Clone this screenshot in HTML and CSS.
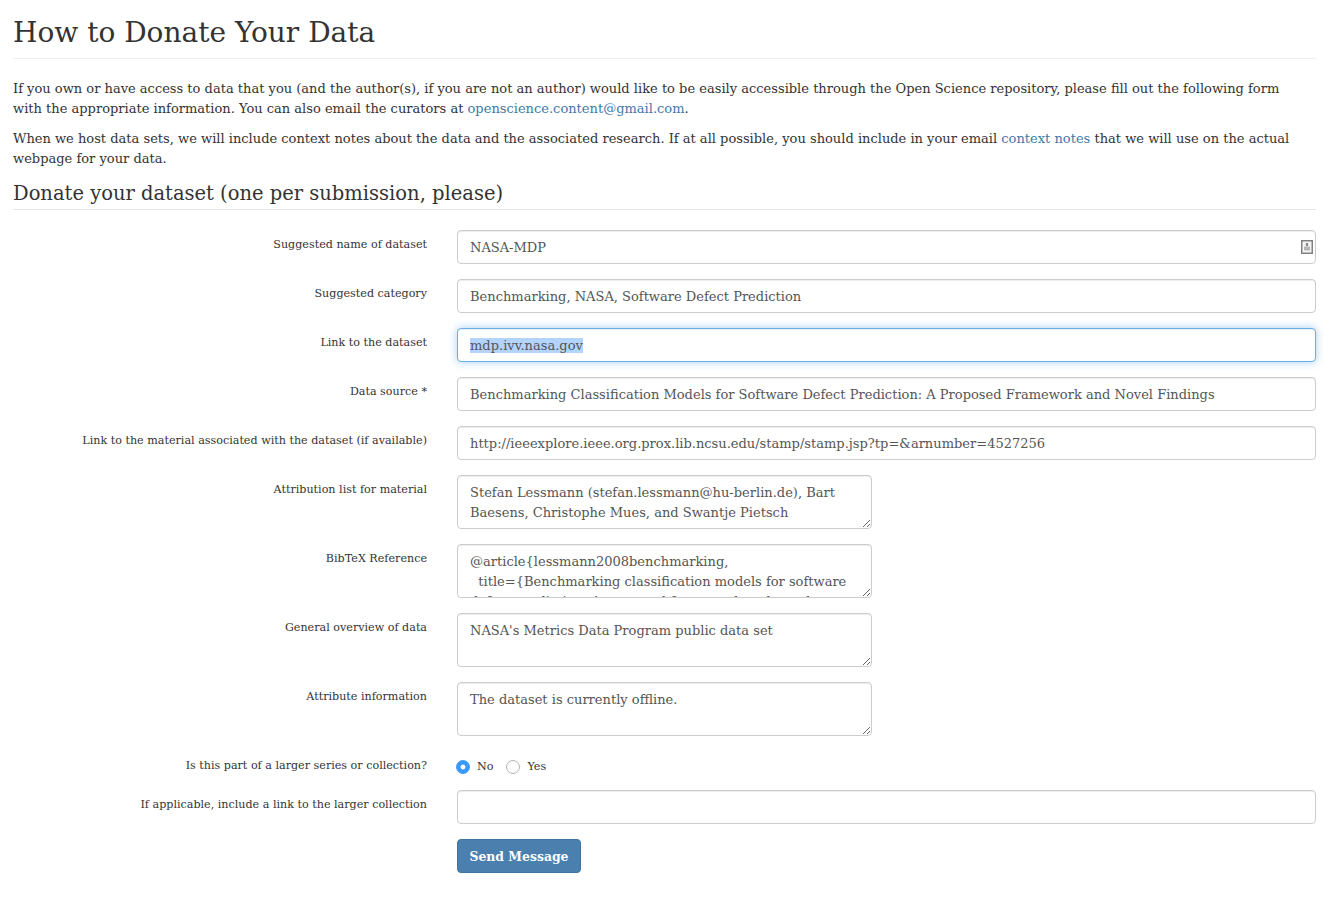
FILE: index.html
```html
<!DOCTYPE html>
<html>
<head>
<meta charset="utf-8">
<title>How to Donate Your Data</title>
<link rel="stylesheet" href="styles.css">
</head>
<body>

<div id="main">

  <h1 class="page-title">How to Donate Your Data</h1>

  <p>If you own or have access to data that you (and the author(s), if you are not an author) would like to be easily accessible through the Open Science repository, please fill out the following form with the appropriate information. You can also email the curators at <a href="#">openscience.content@gmail.com</a>.</p>
  <p>When we host data sets, we will include context notes about the data and the associated research. If at all possible, you should include in your email <a href="#">context notes</a> that we will use on the actual webpage for your data.</p>

  <h2 class="form-title">Donate your dataset (one per submission, please)</h2>

  <form class="donate-form">

    <div class="row">
      <label for="f1">Suggested name of dataset</label>
      <div class="field has-icon">
        <input id="f1" type="text" value="NASA-MDP">
        <svg class="contact-icon" width="12" height="14" viewBox="0 0 12 14">
          <rect x="0.75" y="0.75" width="10.5" height="12.5" fill="#f7f7f7" stroke="#808080" stroke-width="1.5"/>
          <rect x="4.8" y="3" width="2.4" height="3" fill="#8a8a8a"/>
          <rect x="3" y="6.5" width="6" height="4" fill="#b5b5b5"/>
        </svg>
      </div>
    </div>

    <div class="row">
      <label for="f2">Suggested category</label>
      <div class="field"><input id="f2" type="text" value="Benchmarking, NASA, Software Defect Prediction"></div>
    </div>

    <div class="row">
      <label for="f3">Link to the dataset</label>
      <div class="field"><input id="f3" type="text" value="mdp.ivv.nasa.gov" autofocus onfocus="this.select()"></div>
    </div>

    <div class="row">
      <label for="f4">Data source *</label>
      <div class="field"><input id="f4" type="text" value="Benchmarking Classification Models for Software Defect Prediction: A Proposed Framework and Novel Findings"></div>
    </div>

    <div class="row">
      <label for="f5">Link to the material associated with the dataset (if available)</label>
      <div class="field"><input id="f5" type="text" value="http://ieeexplore.ieee.org.prox.lib.ncsu.edu/stamp/stamp.jsp?tp=&amp;arnumber=4527256"></div>
    </div>

    <div class="row">
      <label for="f6">Attribution list for material</label>
      <div class="field"><textarea id="f6">Stefan Lessmann (stefan.lessmann@hu-berlin.de), Bart Baesens, Christophe Mues, and Swantje Pietsch</textarea></div>
    </div>

    <div class="row">
      <label for="f7">BibTeX Reference</label>
      <div class="field"><textarea id="f7">@article{lessmann2008benchmarking,
  title={Benchmarking classification models for software defect prediction: A proposed framework and novel findings},
  author={Lessmann, Stefan and Baesens, Bart and Mues, Christophe and Pietsch, Swantje}
}</textarea></div>
    </div>

    <div class="row">
      <label for="f8">General overview of data</label>
      <div class="field"><textarea id="f8">NASA's Metrics Data Program public data set</textarea></div>
    </div>

    <div class="row">
      <label for="f9">Attribute information</label>
      <div class="field"><textarea id="f9">The dataset is currently offline.</textarea></div>
    </div>

    <div class="row row-radio">
      <label>Is this part of a larger series or collection?</label>
      <div class="field radios">
        <label class="radio"><input type="radio" name="series" checked><span>No</span></label>
        <label class="radio"><input type="radio" name="series"><span>Yes</span></label>
      </div>
    </div>

    <div class="row">
      <label for="f10">If applicable, include a link to the larger collection</label>
      <div class="field"><input id="f10" type="text"></div>
    </div>

    <div class="row">
      <div class="spacer"></div>
      <div class="field"><button type="button" class="send">Send Message</button></div>
    </div>

  </form>

</div>

</body>
</html>
```

FILE: styles.css
```css
*{
  box-sizing:border-box;
}

body{
  margin:0;
  font-family:"DejaVu Serif","Liberation Serif",serif;
  font-size:13.03px;
  line-height:20px;
  color:#333333;
  background:#ffffff;
}

a{
  color:#4179a8;
  text-decoration:none;
}

#main{
  padding:0 26px 0 13px;
}

p{
  margin:0 0 10px 0;
  max-width:1295px;
}

.page-title{
  margin:0 0 20px 0;
  padding:15px 0 7px 0;
  height:59px;
  font-size:28px;
  line-height:36px;
  font-weight:normal;
  border-bottom:1px solid #eeeeee;
}

.form-title{
  margin:0 0 20px 0;
  padding:1px 0 1px 0;
  height:31px;
  font-size:19.5px;
  line-height:28px;
  font-weight:normal;
  border-bottom:1px solid #e6e6e6;
}

.row{
  display:flex;
  margin-bottom:15px;
}

.row > label,
.spacer{
  flex:none;
  width:414px;
  padding-top:5px;
  text-align:right;
  font-size:11.15px;
  line-height:20px;
}

.field{
  flex:1;
  margin-left:30px;
  position:relative;
}

input[type=text],
textarea{
  display:block;
  width:100%;
  height:34px;
  padding:6px 12px;
  font-family:inherit;
  font-size:13.03px;
  line-height:20px;
  color:#555555;
  background:#ffffff;
  border:1px solid #cccccc;
  border-radius:4px;
  box-shadow:inset 0 1px 1px rgba(0,0,0,0.075);
  outline:none;
}

input[type=text]:focus{
  border-color:#66afe9;
  box-shadow:inset 0 1px 1px rgba(0,0,0,0.075),0 0 8px rgba(102,175,233,0.6);
}

input::selection{
  background:#b3d4fc;
}

textarea{
  width:415px;
  height:54px;
  padding-top:7px;
}

.contact-icon{
  position:absolute;
  right:3px;
  top:10px;
}

.row-radio{
  margin-bottom:5px;
  height:34px;
}

.radios{
  display:flex;
  align-items:flex-start;
  padding-top:6px;
  margin-left:29px;
  font-size:11.15px;
  color:#333333;
}

.radio{
  display:flex;
  align-items:center;
  height:20px;
  margin-right:13px;
}

.radio input{
  appearance:none;
  -webkit-appearance:none;
  width:14px;
  height:14px;
  margin:0 7px 0 0;
  background:#ffffff;
  border:1px solid #b5b5b5;
  border-radius:50%;
}

.radio input:checked{
  background:radial-gradient(circle,#ffffff 0,#ffffff 2px,#3b99fc 2.8px);
  border-color:#3b99fc;
}

.send{
  display:block;
  width:124px;
  height:34px;
  padding:0;
  font-family:inherit;
  font-size:12.4px;
  font-weight:bold;
  color:#ffffff;
  background:#4a7fae;
  border:1px solid #41749f;
  border-radius:4px;
}
```
